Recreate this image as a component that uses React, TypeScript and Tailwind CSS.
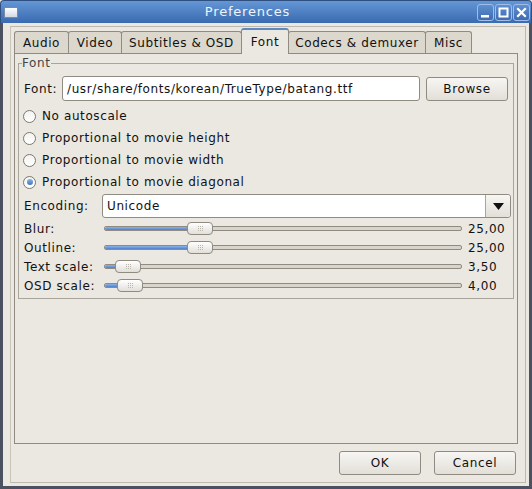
import React from 'react';

const tabs = [
  { name: 'Audio', w: 'w-[55px]' },
  { name: 'Video', w: 'w-[54px]' },
  { name: 'Subtitles & OSD', w: 'w-[121px]' },
  { name: 'Font', w: 'w-[48px]', active: true },
  { name: 'Codecs & demuxer', w: 'w-[138px]' },
  { name: 'Misc', w: 'w-[47px]' },
];

const radios = [
  { label: 'No autoscale' },
  { label: 'Proportional to movie height' },
  { label: 'Proportional to movie width' },
  { label: 'Proportional to movie diagonal', checked: true },
];

const sliders = [
  { label: 'Blur:', thumb: 83, value: '25,00' },
  { label: 'Outline:', thumb: 83, value: '25,00' },
  { label: 'Text scale:', thumb: 11, value: '3,50' },
  { label: 'OSD scale:', thumb: 13, value: '4,00' },
];

function TitleButton({ kind }: { kind: 'min' | 'max' | 'close' }) {
  return (
    <div className="w-[17px] h-[17px] rounded-[3px] border border-[#9fbde6] bg-gradient-to-b from-[#5e8fd0] to-[#3d6cb0] flex items-center justify-center">
      <svg width="11" height="11" viewBox="0 0 11 11">
        {kind === 'min' && <rect x="1" y="8" width="8" height="2.5" fill="#fff" />}
        {kind === 'max' && (
          <rect x="1.5" y="1.5" width="8" height="8" fill="none" stroke="#fff" strokeWidth="2" />
        )}
        {kind === 'close' && (
          <path d="M2 2 L9 9 M9 2 L2 9" stroke="#fff" strokeWidth="2.2" strokeLinecap="square" />
        )}
      </svg>
    </div>
  );
}

function Radio({ checked }: { checked?: boolean }) {
  return (
    <div className="w-[13px] h-[13px] rounded-full border border-[#7c786f] bg-gradient-to-b from-[#f4f3f0] to-white flex items-center justify-center">
      {checked && (
        <div className="w-[6px] h-[6px] rounded-full bg-gradient-to-b from-[#8fb4e6] to-[#3f74bf]" />
      )}
    </div>
  );
}

function Slider({ thumb }: { thumb: number }) {
  return (
    <div className="relative w-[358px] h-[5px] rounded-[2px] border border-[#8f8b82] bg-[#d8d4cb]">
      <div
        className="h-full rounded-[2px] bg-gradient-to-b from-[#8db3e6] to-[#4d82cc]"
        style={{ width: thumb + 4 }}
      />
      <div
        className="absolute top-[-5px] w-[26px] h-[13px] rounded-[4px] border border-[#8f8b82] bg-gradient-to-b from-white to-[#e2dfd8] flex items-center justify-center"
        style={{ left: thumb - 1 }}
      >
        <div className="grid grid-cols-3 gap-[1px]">
          {Array.from({ length: 9 }).map((_, i) => (
            <div key={i} className="w-[1px] h-[1px] bg-[#b9b5ac]" />
          ))}
        </div>
      </div>
    </div>
  );
}

function Button({ label }: { label: string }) {
  return (
    <div className="w-[82px] h-[24px] rounded-[3px] border border-[#8f8b82] bg-gradient-to-b from-[#f7f6f3] to-[#e2dfd8] flex items-center justify-center">
      {label}
    </div>
  );
}

export default function App() {
  return (
    <div className="w-[532px] h-[489px] flex flex-col bg-[#ebe8e2] font-['DejaVu_Sans',sans-serif] text-[12px] tracking-[0.6px] text-[#111] overflow-hidden">
      {/* title bar */}
      <div className="h-[23px] shrink-0 flex items-center bg-gradient-to-b from-[#6497d6] to-[#3a6ab0] rounded-t-[4px] border-x border-t border-[#2f4f80]">
        <div className="ml-[3px] w-[14px] h-[11px] border border-[#7b8aa3] bg-gradient-to-b from-white to-[#d4d9e2]" />
        <div className="flex-1 text-center text-[13px] tracking-[0.8px] text-[#eef3fb]">Preferences</div>
        <div className="flex gap-[1px] mr-[1px]">
          <TitleButton kind="min" />
          <TitleButton kind="max" />
          <TitleButton kind="close" />
        </div>
      </div>

      {/* body */}
      <div className="flex-1 flex flex-col border-x-[3px] border-b-[3px] border-[#4b5160] pt-[3px] pb-[3px] pl-[7px] pr-[3px]">
        <div className="flex-1 flex flex-col border border-[#bdb9af] border-l-[#c9c5bb] pt-[2px] pl-[3px] pr-[7px] pb-[7px]">
          {/* tabs */}
          <div className="h-[24px] flex items-end relative z-10">
            {tabs.map((t, i) => (
              <div
                key={t.name}
                className={
                  t.active
                    ? `${t.w} ${i > 0 ? '-ml-px' : ''} h-[26px] -mb-[1px] rounded-t-[3px] border-x border-t-2 border-x-[#8f8b82] border-t-[#5f88c0] bg-[#ebe8e2] flex items-center justify-center pb-[1px]`
                    : `${t.w} ${i > 0 ? '-ml-px' : ''} h-[22px] rounded-t-[3px] border-x border-t border-[#8f8b82] bg-[#dcd8ce] flex items-center justify-center pt-[1px]`
                }
              >
                {t.name}
              </div>
            ))}
          </div>

          {/* panel */}
          <div className="flex-1 border border-[#8f8b82] bg-[#ebe8e2] pl-[3px] pr-[3px] pt-[2px]">
            <fieldset className="border border-[#a9a59b] px-0 pb-[3px]">
              <legend className="ml-[3px] px-0 text-[#444] leading-[14px]">Font</legend>

              <div className="mt-[6px] flex items-center pl-[5px] gap-[6px]">
                <span className="w-[32px]">Font:</span>
                <div className="w-[358px] h-[25px] rounded-[3px] border border-[#8f8b82] bg-white flex items-center pl-[4px]">
                  /usr/share/fonts/korean/TrueType/batang.ttf
                </div>
                <Button label="Browse" />
              </div>

              <div className="mt-[4px] flex flex-col">
                {radios.map((r) => (
                  <div key={r.label} className="h-[22px] flex items-center pl-[4px] gap-[6px]">
                    <Radio checked={r.checked} />
                    <span>{r.label}</span>
                  </div>
                ))}
              </div>

              <div className="mt-[1px] flex items-center pl-[5px]">
                <span className="w-[78px]">Encoding:</span>
                <div className="w-[409px] h-[24px] rounded-[3px] border border-[#8f8b82] bg-white flex items-center">
                  <span className="flex-1 pl-[4px]">Unicode</span>
                  <div className="w-[25px] h-full border-l border-[#a9a59b] bg-gradient-to-b from-[#f7f6f3] to-[#e2dfd8] rounded-r-[3px] flex items-center justify-center">
                    <svg width="11" height="7" viewBox="0 0 11 7">
                      <path d="M0 0 H11 L5.5 7 Z" fill="#111" />
                    </svg>
                  </div>
                </div>
              </div>

              <div className="mt-[1px] flex flex-col">
                {sliders.map((s) => (
                  <div key={s.label} className="h-[19px] flex items-center pl-[5px]">
                    <span className="w-[80px]">{s.label}</span>
                    <Slider thumb={s.thumb} />
                    <span className="ml-[6px]">{s.value}</span>
                  </div>
                ))}
              </div>
            </fieldset>
          </div>

          {/* buttons */}
          <div className="h-[24px] mt-[7px] flex justify-end gap-[13px] pr-[2px]">
            <Button label="OK" />
            <Button label="Cancel" />
          </div>
        </div>
      </div>
    </div>
  );
}
